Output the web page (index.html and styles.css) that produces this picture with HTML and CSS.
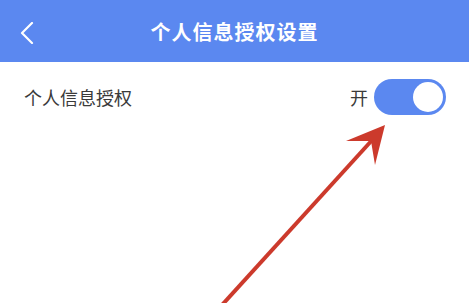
FILE: index.html
```html
<!DOCTYPE html>
<html lang="zh-CN">
<head>
    <meta charset="UTF-8">
    <meta name="viewport" content="width=device-width, initial-scale=1.0">
    <title>个人信息授权设置</title>
    <link rel="stylesheet" href="styles.css">
</head>
<body>

<div class="page">
    <div class="header">
        <span class="back">
            <svg width="14" height="22" viewBox="0 0 14 22">
                <path d="M12 1 L2 11 L12 21" fill="none" stroke="#fff" stroke-width="2.2" stroke-linecap="round" stroke-linejoin="round"/>
            </svg>
        </span>
        <h1>个人信息授权设置</h1>
    </div>

    <!-- 授权开关 -->
    <div class="row">
        <span class="row-label">个人信息授权</span>
        <div class="row-right">
            <span class="state">开</span>
            <span class="switch on"><span class="knob"></span></span>
        </div>
    </div>

    <!-- 标注箭头 -->
    <svg class="arrow" width="469" height="303" viewBox="0 0 469 303">
        <line x1="222" y1="305" x2="374" y2="138" stroke="#cc3a2c" stroke-width="4"/>
        <path d="M385 125 L346 141 L371 141 L375 165 Z" fill="#cc3a2c"/>
    </svg>
</div>

</body>
</html>
```

FILE: styles.css
```css
* {
    box-sizing: border-box;
    margin: 0;
    padding: 0;
}

body {
    background: #fff;
    font-family: "Noto Sans CJK SC", "Noto Sans", sans-serif;
    width: 469px;
    height: 303px;
    overflow: hidden;
}

.page {
    position: relative;
    height: 303px;
}

.header {
    height: 62px;
    background-color: #5b88f0;
    display: flex;
    align-items: center;
    justify-content: center;
    position: relative;
}

.header h1 {
    color: #fff;
    font-size: 20px;
    font-weight: 700;
    letter-spacing: 1px;
}

.back {
    position: absolute;
    left: 20px;
    top: 22px;
    display: flex;
}

.row {
    display: flex;
    align-items: center;
    justify-content: space-between;
    padding: 17px 23px 0 24px;
}

.row-label {
    font-size: 18px;
    color: #3a3a3a;
}

.row-right {
    display: flex;
    align-items: center;
    gap: 6px;
}

.state {
    font-size: 18px;
    color: #3a3a3a;
}

.switch {
    width: 72px;
    height: 36px;
    border-radius: 18px;
    background-color: #ccc;
    display: flex;
    align-items: center;
    padding: 0 3px;
}

.switch.on {
    background-color: #5b88f0;
    justify-content: flex-end;
}

.knob {
    width: 30px;
    height: 30px;
    border-radius: 50%;
    background: #fff;
}

.arrow {
    position: absolute;
    left: 0;
    top: 0;
}
```
